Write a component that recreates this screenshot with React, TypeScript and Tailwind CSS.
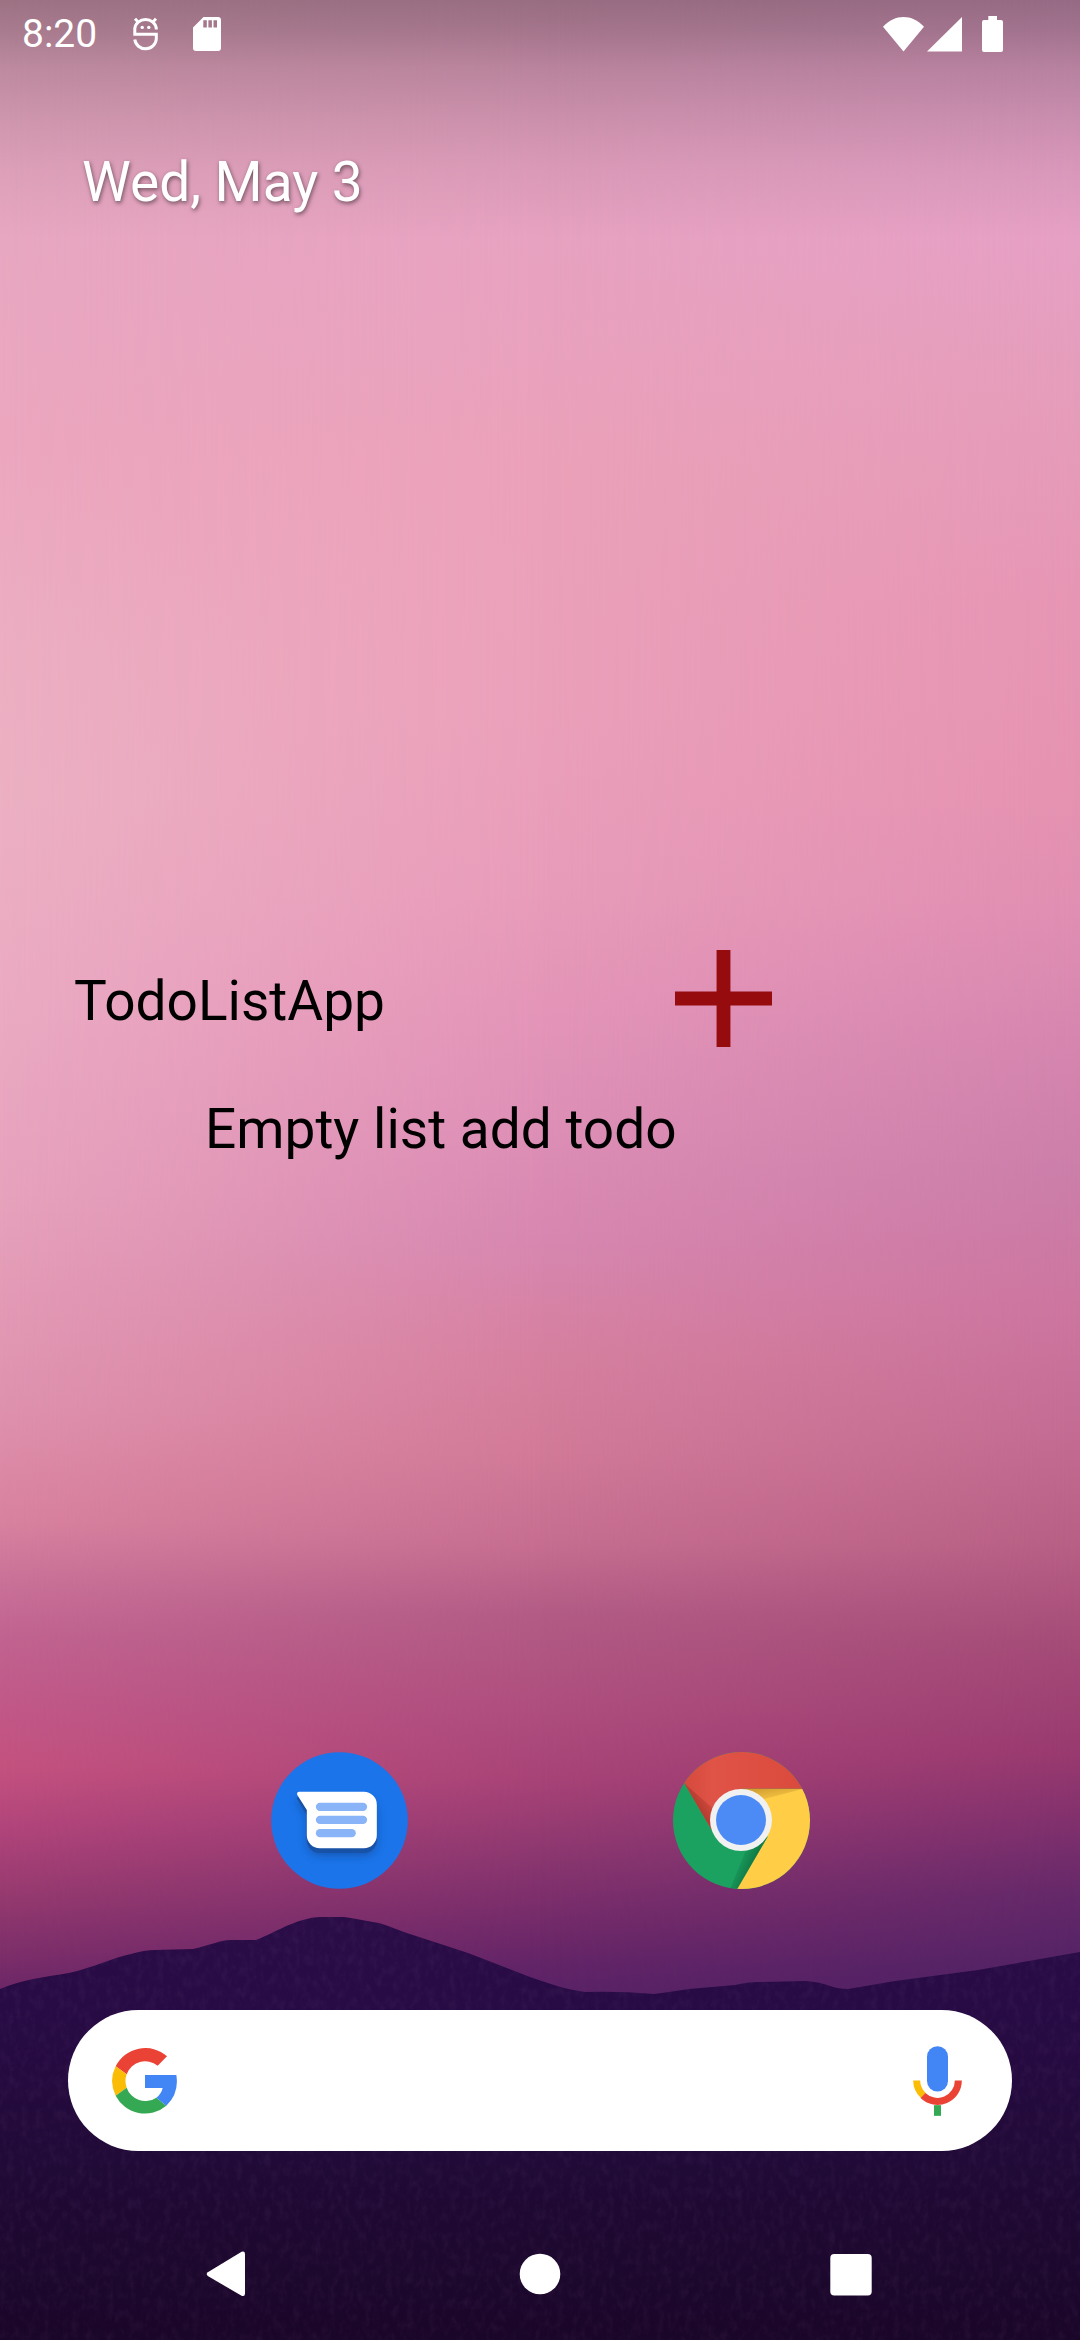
import React from "react";

function Wallpaper() {
  return (
    <div aria-hidden="true" className="absolute inset-0 -z-10 overflow-hidden">
      <div className="absolute inset-0 bg-[linear-gradient(to_bottom,#e6a9c2_0%,#e8a7c1_10%,#eca7bf_19%,#ecaec2_28%,#ecb0c3_34%,#ebaac2_43%,#e7a2bc_51%,#df92ae_60%,#d9829f_65%,#c86f97_68%,#c16390_70%,#c15888_73%,#c4527f_75.5%,#b2457b_78%,#963a70_81%,#782c69_84%,#622264_86%)]" />
      <div className="absolute inset-0 bg-[linear-gradient(to_bottom,#e0a0bf_0%,#e7a2c1_10%,#eba1b9_20%,#eba0ba_30%,#e89cb9_38%,#e495b8_43%,#de8fb6_48%,#d787b0_53%,#d6809f_58%,#d27a98_62%,#c66e90_66%,#b25b85_69%,#ae4e7e_73%,#a84377_76%,#8a366f_79.5%,#752b6a_82%,#622467_84%,#542265_86%)] mask-[linear-gradient(to_right,transparent,black_50%)]" />
      <div className="absolute inset-0 bg-[linear-gradient(to_bottom,#dc9cc2_0%,#e6a0c4_10%,#e59cb9_18%,#e695b3_26%,#e592b0_34%,#e08eb2_39%,#d686af_44%,#cb7ea9_50%,#cc759f_56%,#c46c93_61%,#b85f85_66%,#a54c78_70%,#98396f_75%,#7f306d_78%,#642869_81%,#532365_84%,#4d2063_86%)] mask-[linear-gradient(to_right,transparent_50%,black)]" />
      <div className="absolute inset-0 bg-[linear-gradient(to_bottom,rgb(0_0_0/0.32)_0,rgb(0_0_0/0.27)_30px,rgb(0_0_0/0.18)_68px,rgb(0_0_0/0.11)_117px,rgb(0_0_0/0.05)_167px,transparent_240px)]" />
      <svg
        viewBox="0 0 1080 430"
        preserveAspectRatio="none"
        className="absolute bottom-0 left-0 h-[430px] w-full"
      >
        <defs>
          <linearGradient id="hill" x1="0" y1="0" x2="0" y2="1">
            <stop offset="0" stopColor="#2a0c47" />
            <stop offset="0.3" stopColor="#260a42" />
            <stop offset="0.6" stopColor="#200a36" />
            <stop offset="1" stopColor="#1a0628" />
          </linearGradient>
          <filter id="grain" x="0" y="0" width="100%" height="100%">
            <feTurbulence type="fractalNoise" baseFrequency="0.14 0.09" numOctaves="3" seed="4" />
            <feColorMatrix values="0 0 0 0 0.42  0 0 0 0 0.22  0 0 0 0 0.48  1.2 0 0 0 -0.5" />
            <feComposite in2="SourceGraphic" operator="in" />
          </filter>
          <path
            id="ridge"
            d="M0 79C25 69 45 67 69 63C95 57 112 48 131 44Q145 40 155 40L193 39C208 36 220 30 231 30L256 30C265 27 290 13 303 10Q312 7 320 7L344 7C358 9 366 11 379 13C392 17 400 21 413 25L468 43L530 67C550 74 568 80 585 82Q620 81 654 84Q670 82 689 79L735 75Q748 72 758 72L806 71Q820 72 830 76Q838 79 848 79L895 71L978 60L1080 42V430H0Z"
          />
        </defs>
        <use href="#ridge" fill="url(#hill)" />
        <use href="#ridge" fill="#fff" filter="url(#grain)" opacity="0.12" />
      </svg>
    </div>
  );
}

function StatusBar() {
  return (
    <header className="flex h-[68px] items-center justify-between pr-[77px] pl-[22px] text-white">
      <div className="flex items-center">
        <time className="text-[39px] leading-[48px]">8:20</time>
        <svg viewBox="0 0 25 34" className="ml-[36px] h-[34px] w-[25px]" fill="none" stroke="currentColor" strokeWidth="3">
          <path d="M23.3 12.5V11.5A10.8 10 0 0 0 1.8 11.5V17.2H23.3V22A10.8 10.6 0 0 1 1.8 22.5" />
          <path d="M2 1.8L5.4 5.2M23 1.8L19.6 5.2" />
          <circle cx="9.2" cy="10.4" r="1.7" fill="currentColor" stroke="none" />
          <circle cx="15.8" cy="10.4" r="1.7" fill="currentColor" stroke="none" />
        </svg>
        <svg viewBox="0 0 28 34" className="ml-[35px] h-[34px] w-[28px]" fill="currentColor">
          <path
            fillRule="evenodd"
            d="M10.5 0H25Q28 0 28 3V31Q28 34 25 34H3Q0 34 0 31V10.5ZM10.3 3.2V10.5H13.8V3.2ZM15.4 3.2V10.5H18.9V3.2ZM20.5 3.2V10.5H24V3.2Z"
          />
        </svg>
      </div>
      <div className="flex items-center">
        <svg viewBox="0 0 41 35" className="h-[35px] w-[41px]" fill="currentColor">
          <path d="M0 9.8C12 -3.2 29 -3.2 41 9.8L20.5 34.5Z" />
        </svg>
        <svg viewBox="0 0 35 35" className="ml-[3px] h-[35px] w-[35px]" fill="currentColor">
          <path d="M35 0V34.5H0Z" />
        </svg>
        <svg viewBox="0 0 21 36" className="ml-[20px] h-[36px] w-[21px]" fill="currentColor">
          <path d="M6.3 0H15V4H19Q21 4 21 6V34Q21 36 19 36H2Q0 36 0 34V6Q0 4 2 4H6.3Z" />
        </svg>
      </div>
    </header>
  );
}

function MessagesIcon() {
  return (
    <svg viewBox="64 66 410 411" className="size-[137px]">
      <defs>
        <filter id="soft" x="-30%" y="-30%" width="160%" height="160%">
          <feGaussianBlur stdDeviation="12" />
        </filter>
        <path
          id="bubble"
          d="M148 185H342A39 39 0 0 1 381 224V316A39 39 0 0 1 342 355H210A39 39 0 0 1 171 316V240L142 194Q140 186 148 185Z"
        />
      </defs>
      <circle cx="269" cy="271.5" r="205" fill="#1b74e9" />
      <use href="#bubble" y="22" fill="#12499b" opacity="0.65" filter="url(#soft)" />
      <use href="#bubble" y="14" fill="#1852a6" />
      <use href="#bubble" fill="#fff" />
      <g fill="#8ab4f8">
        <rect x="198" y="218" width="154" height="25" rx="12.5" />
        <rect x="198" y="257" width="154" height="25" rx="12.5" />
        <rect x="198" y="297" width="120" height="25" rx="12.5" />
      </g>
    </svg>
  );
}

function ChromeIcon() {
  return (
    <svg viewBox="69 66 411 411" className="size-[137px]">
      <defs>
        <clipPath id="disc">
          <circle cx="274.5" cy="271.5" r="205.5" />
        </clipPath>
        <linearGradient id="red" x1="0" y1="0" x2="1" y2="0">
          <stop offset="0" stopColor="#cf4638" />
          <stop offset="0.3" stopColor="#e05347" />
          <stop offset="1" stopColor="#da493b" />
        </linearGradient>
        <linearGradient id="redShade" gradientUnits="userSpaceOnUse" x1="145" y1="235" x2="195" y2="195">
          <stop offset="0" stopColor="#9c2f24" stopOpacity="0.6" />
          <stop offset="1" stopColor="#9c2f24" stopOpacity="0" />
        </linearGradient>
        <linearGradient id="yellowShade" gradientUnits="userSpaceOnUse" x1="340" y1="176" x2="350" y2="230">
          <stop offset="0" stopColor="#b07d20" stopOpacity="0.55" />
          <stop offset="1" stopColor="#c79530" stopOpacity="0" />
        </linearGradient>
        <linearGradient id="greenShade" gradientUnits="userSpaceOnUse" x1="308" y1="398" x2="262" y2="378">
          <stop offset="0" stopColor="#0b6238" stopOpacity="0.6" />
          <stop offset="1" stopColor="#0b6238" stopOpacity="0" />
        </linearGradient>
      </defs>
      <g clipPath="url(#disc)">
        <rect x="60" y="60" width="430" height="430" fill="#1ba260" />
        <path d="M273 176H490V490H257L263 475L353 320Z" fill="#ffcd46" />
        <path d="M60 60H490V176H273L185 300L103 160L60 100Z" fill="url(#red)" />
        <path d="M103 160L185 300L200 245Z" fill="url(#redShade)" />
        <path d="M273 177H458L340 208Z" fill="url(#yellowShade)" />
        <path d="M263 475L353 320L290 355L240 477Z" fill="url(#greenShade)" />
      </g>
      <circle cx="273" cy="270" r="93" fill="#f1f1f1" />
      <circle cx="273" cy="270" r="75" fill="#4c8bf5" />
    </svg>
  );
}

function GoogleIcon() {
  return (
    <svg viewBox="186 171 195 198" className="h-[66px] w-[65px] shrink-0">
      <path d="M351 196A99 99 0 0 0 197 226L230 250A59 59 0 0 1 323 224Z" fill="#ea4335" />
      <path d="M197 226A99 99 0 0 0 197 314L230 290A59 59 0 0 1 230 250Z" fill="#fbbc05" />
      <path d="M197 314A99 99 0 0 0 349 344L319 320A59 59 0 0 1 230 290Z" fill="#34a853" />
      <path d="M285 252H379Q388 307 349 344L319 320Q334 309 338 291H285Z" fill="#4285f4" />
    </svg>
  );
}

function MicIcon() {
  return (
    <svg viewBox="159 167 147 209" className="h-[70px] w-[49px]">
      <rect x="201" y="167" width="63" height="136" rx="31.5" fill="#4285f4" />
      <path d="M170 270A62.5 62.5 0 0 0 190 315" fill="none" stroke="#fbbc05" strokeWidth="21" />
      <path d="M189 315A62.5 62.5 0 0 0 295 270" fill="none" stroke="#ea4335" strokeWidth="21" />
      <rect x="222" y="344" width="21" height="32" fill="#34a853" />
    </svg>
  );
}

export default function App() {
  return (
    <div className="relative isolate flex min-h-screen flex-col font-[Roboto,sans-serif]">
      <Wallpaper />
      <StatusBar />

      <main className="flex flex-1 flex-col">
        <p className="mt-[82px] pl-[82px] text-[55px] leading-[64px] text-white [text-shadow:1px_2px_4px_rgb(0_0_0/0.5)]">
          Wed, May 3
        </p>

        <section className="mt-[736px] text-[55px] leading-[64px] text-black">
          <div className="flex items-center justify-between pr-[308px] pl-[74px]">
            <h1 className="pt-1">TodoListApp</h1>
            <button type="button" aria-label="Add todo" className="text-[#950b0e]">
              <svg viewBox="0 0 14 14" className="size-[97px]" fill="currentColor">
                <path d="M6 0H8V6H14V8H8V14H6V8H0V6H6Z" />
              </svg>
            </button>
          </div>
          <p className="mt-[50px] pl-[205px]">Empty list add todo</p>
        </section>

        <div className="mt-auto flex justify-center gap-[265px]">
          <button type="button" aria-label="Messages">
            <MessagesIcon />
          </button>
          <button type="button" aria-label="Chrome">
            <ChromeIcon />
          </button>
        </div>

        <form
          role="search"
          className="mx-[68px] mt-[121px] mb-[57px] flex h-[141px] items-center rounded-full bg-white pr-[50px] pl-[44px]"
        >
          <GoogleIcon />
          <input
            type="text"
            aria-label="Search"
            className="h-full min-w-0 flex-1 bg-transparent px-6 text-[39px] outline-none"
          />
          <button type="button" aria-label="Voice search">
            <MicIcon />
          </button>
        </form>
      </main>

      <nav className="flex h-[132px] items-center justify-center gap-[263px] text-white">
        <button type="button" aria-label="Back">
          <svg viewBox="0 0 48 48" className="size-[48px]" fill="currentColor">
            <path d="M2.8 22.2L36.6 1.8Q40 0.8 40 4V43.5Q40 47 36.6 45.8L2.8 26Q0.6 24 2.8 22.2Z" />
          </svg>
        </button>
        <button type="button" aria-label="Home">
          <svg viewBox="0 0 48 48" className="size-[48px]" fill="currentColor">
            <circle cx="24" cy="24" r="20.3" />
          </svg>
        </button>
        <button type="button" aria-label="Overview">
          <svg viewBox="0 0 48 48" className="size-[48px]" fill="currentColor">
            <rect x="3.3" y="4" width="41.4" height="41.4" rx="4" />
          </svg>
        </button>
      </nav>
    </div>
  );
}
